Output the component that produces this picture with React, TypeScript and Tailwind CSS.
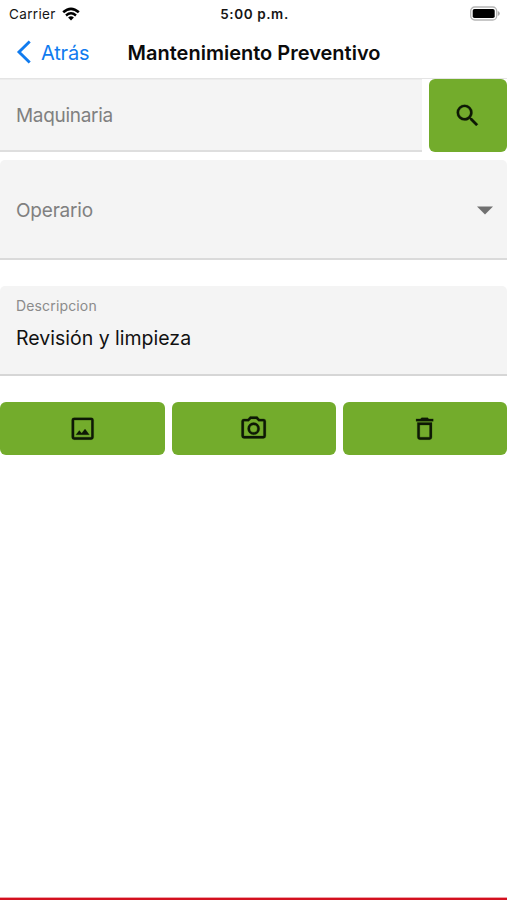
import type { ReactNode } from "react";

const paths = {
  search:
    "M9.5,3A6.5,6.5 0 0,1 16,9.5C16,11.11 15.41,12.59 14.44,13.73L14.71,14H15.5L20.5,19L19,20.5L14,15.5V14.71L13.73,14.44C12.59,15.41 11.11,16 9.5,16A6.5,6.5 0 0,1 3,9.5A6.5,6.5 0 0,1 9.5,3M9.5,5C7,5 5,7 5,9.5C5,12 7,14 9.5,14C12,14 14,12 14,9.5C14,7 12,5 9.5,5Z",
  image:
    "M19,19H5V5H19M19,3H5A2,2 0 0,0 3,5V19A2,2 0 0,0 5,21H19A2,2 0 0,0 21,19V5A2,2 0 0,0 19,3M13.96,12.29L11.21,15.83L9.25,13.47L6.5,17H17.5L13.96,12.29Z",
  camera:
    "M20,4H16.83L15,2H9L7.17,4H4A2,2 0 0,0 2,6V18A2,2 0 0,0 4,20H20A2,2 0 0,0 22,18V6A2,2 0 0,0 20,4M20,18H4V6H8.05L9.88,4H14.12L15.95,6H20V18M12,7A5,5 0 0,0 7,12A5,5 0 0,0 12,17A5,5 0 0,0 17,12A5,5 0 0,0 12,7M12,15A3,3 0 0,1 9,12A3,3 0 0,1 12,9A3,3 0 0,1 15,12A3,3 0 0,1 12,15Z",
  trash:
    "M6,19A2,2 0 0,0 8,21H16A2,2 0 0,0 18,19V7H6V19M8,9H16V19H8V9M15.5,4L14.5,3H9.5L8.5,4H5V6H19V4H15.5Z",
};

function Icon({ name }: { name: keyof typeof paths }) {
  return (
    <svg viewBox="0 0 24 24" className="size-[29.3px] fill-[#0e1806] stroke-[#0e1806] stroke-[0.2]">
      <path fillRule="evenodd" d={paths[name]} />
    </svg>
  );
}

function GreenButton({ label, className, children }: { label: string; className: string; children: ReactNode }) {
  return (
    <button aria-label={label} className={`flex items-center justify-center rounded-[6px] bg-[#73ac2c] ${className}`}>
      {children}
    </button>
  );
}

function StatusBar() {
  return (
    <div className="grid h-7 grid-cols-3 items-center pl-[9px] pr-[7px] text-[#151515]">
      <div className="flex items-center gap-[6px]">
        <span className="text-[13.5px] leading-5 tracking-[0.35px]">Carrier</span>
        <svg viewBox="0 0 18 14" className="-mt-px h-[14px] w-[18px]">
          <path d="M1.2 5.3Q9-1.7 16.8 5.3" fill="none" stroke="#000" strokeWidth="2.6" />
          <path d="M4 8.5Q9 4.2 14 8.5" fill="none" stroke="#000" strokeWidth="2.4" />
          <path d="M6.1 10.5Q9 8.2 11.9 10.5L9 13.6Z" />
        </svg>
      </div>
      <span className="text-center text-[13.5px] font-semibold leading-5 tracking-[0.6px]">5:00 p.m.</span>
      <svg viewBox="0 0 31 15" className="-mt-[2px] h-[15px] w-[31px] justify-self-end">
        <rect x="1.7" y="1" width="26" height="13" rx="4" fill="#fff" stroke="#b5b5b5" strokeWidth="1.3" />
        <rect x="3.7" y="3" width="22" height="9" rx="1.8" />
        <path d="M28.8 5v5q2-.8 2-2.5t-2-2.5" fill="#aaa" />
      </svg>
    </div>
  );
}

export default function App() {
  return (
    <div className="flex h-[900px] w-[507px] flex-col bg-white font-['Inter',sans-serif]">
      <StatusBar />
      <header className="grid h-[51px] grid-cols-[127px_1fr_126px] items-center border-b border-[#e4e4e4]">
        <button className="flex items-center gap-[9px] pl-[16px] text-[#107bef]">
          <svg viewBox="0 0 16 24" className="-mt-[2px] h-6 w-4">
            <path d="M13.7 1.5L3 12L13.7 22.5" fill="none" stroke="currentColor" strokeWidth="2.9" />
          </svg>
          <span className="text-[20px] leading-6 tracking-[-0.2px]">Atrás</span>
        </button>
        <h1 className="-mt-px whitespace-nowrap text-center text-[20px] font-semibold leading-6 text-[#0b0b0b]">
          Mantenimiento Preventivo
        </h1>
      </header>

      <div className="flex gap-[7px]">
        <div className="flex h-[73px] w-[422px] items-center border-b-2 border-t border-b-[#dedede] border-t-[#ececec] bg-[#f4f4f4] pl-4 pt-[2px]">
          <span className="text-[19px] leading-6 tracking-[-0.3px] text-[#808080]">Maquinaria</span>
        </div>
        <GreenButton label="Buscar" className="h-[73px] w-[78px]">
          <Icon name="search" />
        </GreenButton>
      </div>

      <div className="mt-2 flex h-[100px] items-center justify-between rounded-t-[5px] border-b-2 border-[#dadada] bg-[#f4f4f4] pl-4 pr-[14px] pt-[3px]">
        <span className="text-[19px] leading-6 tracking-[-0.2px] text-[#808080]">Operario</span>
        <svg viewBox="0 0 16 9" className="h-[9px] w-4 fill-[#707070]">
          <path d="M0 .5H16L8 8.5Z" />
        </svg>
      </div>

      <div className="mt-[26px] h-[90px] rounded-t-[5px] border-b-2 border-[#d6d6d6] bg-[#f4f4f4] pl-4 pt-[10px]">
        <div className="text-[14px] leading-5 tracking-[0.15px] text-[#8b8b8b]">Descripcion</div>
        <div className="mt-[10px] text-[19.5px] leading-6 text-[#111]">Revisión y limpieza</div>
      </div>

      <div className="mt-[26px] grid grid-cols-[165px_164px_164px] gap-[7px]">
        <GreenButton label="Galería" className="h-[53px]">
          <Icon name="image" />
        </GreenButton>
        <GreenButton label="Cámara" className="h-[53px]">
          <Icon name="camera" />
        </GreenButton>
        <GreenButton label="Eliminar" className="h-[53px]">
          <Icon name="trash" />
        </GreenButton>
      </div>

      <div className="mt-auto h-[3px] border-t border-[#f0a0a8] bg-[#d3101f]" />
    </div>
  );
}
